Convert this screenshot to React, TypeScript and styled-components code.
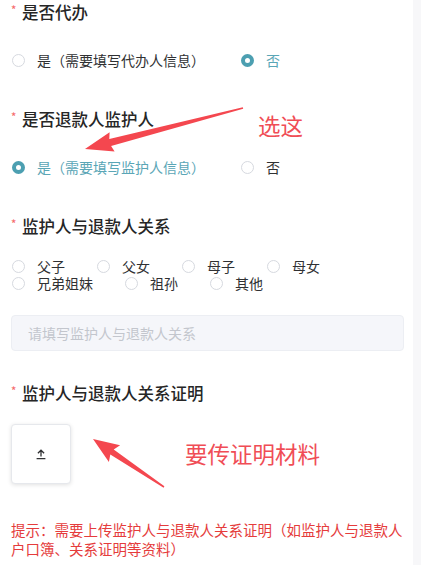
import styled, { createGlobalStyle } from 'styled-components';

const GlobalStyle = createGlobalStyle`
  html, body {
    margin: 0;
    padding: 0;
    background: #f7f7f9;
  }
  * {
    box-sizing: border-box;
  }
`;

const relationOptions = ['父子', '父女', '母子', '母女', '兄弟姐妹', '祖孙', '其他'];

interface OptionProps {
  label: string;
  checked?: boolean;
  gap?: number;
}

function RadioOption({ label, checked = false, gap = 0 }: OptionProps) {
  return (
    <Option $gap={gap}>
      <RadioCircle $checked={checked} />
      <OptionText $checked={checked}>{label}</OptionText>
    </Option>
  );
}

function Title({ children }: { children: string }) {
  return (
    <TitleRow>
      <Star>*</Star>
      {children}
    </TitleRow>
  );
}

export default function App() {
  return (
    <>
      <GlobalStyle />
      <Page>
        <Section $bottom={37}>
          <Title>是否代办</Title>
          <RadioRow>
            <RadioOption label="是（需要填写代办人信息）" gap={36} />
            <RadioOption label="否" checked />
          </RadioRow>
        </Section>

        <Section $bottom={37}>
          <Title>是否退款人监护人</Title>
          <RadioRow>
            <RadioOption label="是（需要填写监护人信息）" checked gap={36} />
            <RadioOption label="否" />
          </RadioRow>
        </Section>

        <Section $bottom={30}>
          <Title>监护人与退款人关系</Title>
          <RelationGroup>
            {relationOptions.map((item) => (
              <RadioOption key={item} label={item} />
            ))}
          </RelationGroup>
          <TextInput placeholder="请填写监护人与退款人关系" />
        </Section>

        <Section $bottom={0}>
          <Title>监护人与退款人关系证明</Title>
          <UploadBox>
            <svg width="12" height="12" viewBox="0 0 12 12" fill="none">
              <path
                d="M6 2.2V8.6M2.9 5.2L6 2.2L9.1 5.2M1.6 10.6H10.4"
                stroke="#303133"
                strokeWidth="1.3"
              />
            </svg>
          </UploadBox>
          <Hint>
            提示：需要上传监护人与退款人关系证明（如监护人与退款人户口簿、关系证明等资料）
          </Hint>
        </Section>

        <ArrowLayer width="421" height="565" viewBox="0 0 421 565">
          <polygon
            points="242.8,107.2 109.3,139.1 109.6,132.3 85,149 114.6,151.6 111.1,145.9 243.2,108.8"
            fill="#f4474f"
          />
          <polygon
            points="164.4,486.3 113.7,449.4 120.1,445.3 93,439 108.9,461.9 110.3,454.4 163.6,487.7"
            fill="#f4474f"
          />
        </ArrowLayer>
        <Note $left={258} $top={111}>选这</Note>
        <Note $left={185} $top={439}>要传证明材料</Note>
      </Page>
    </>
  );
}

const Page = styled.div`
  position: relative;
  width: 413px;
  min-height: 565px;
  background: #ffffff;
  padding: 0 9px 0 11px;
  font-family: 'Noto Sans CJK SC', 'Noto Sans', sans-serif;
  color: #303133;
`;

const Section = styled.div<{ $bottom: number }>`
  display: flex;
  flex-direction: column;
  padding-bottom: ${({ $bottom }) => $bottom}px;
`;

const TitleRow = styled.div`
  display: flex;
  align-items: center;
  height: 24px;
  font-size: 16.5px;
  font-weight: 500;
  color: #262626;
`;

const Star = styled.span`
  width: 11px;
  font-size: 11px;
  color: #f56c6c;
  position: relative;
  top: -3px;
`;

const RadioRow = styled.div`
  display: flex;
  align-items: center;
  height: 20px;
  margin-top: 26px;
  padding-left: 1px;
`;

const RelationGroup = styled.div`
  display: flex;
  flex-wrap: wrap;
  column-gap: 32px;
  margin-top: 20px;
  padding-left: 1px;
  line-height: 17px;
`;

const Option = styled.div<{ $gap: number }>`
  display: flex;
  align-items: center;
  gap: 12px;
  margin-right: ${({ $gap }) => $gap}px;
`;

const RadioCircle = styled.span<{ $checked: boolean }>`
  width: 13px;
  height: 13px;
  border-radius: 50%;
  flex-shrink: 0;
  border: ${({ $checked }) => ($checked ? '4.5px solid #4c9fb1' : '1px solid #d6d9df')};
  background: #ffffff;
`;

const OptionText = styled.span<{ $checked: boolean }>`
  font-size: 14px;
  line-height: 17px;
  color: ${({ $checked }) => ($checked ? '#5aa6b6' : '#303133')};
`;

const TextInput = styled.input`
  margin-top: 23px;
  width: 100%;
  height: 36px;
  border: 1px solid #eceef3;
  border-radius: 4px;
  background: #f5f6fa;
  padding: 0 16px;
  font-family: inherit;
  font-size: 14px;
  outline: none;
  &::placeholder {
    color: #c3c6cd;
  }
`;

const UploadBox = styled.div`
  margin-top: 19px;
  width: 60px;
  height: 60px;
  border: 1px solid #e6e8ec;
  border-radius: 4px;
  background: #ffffff;
  box-shadow: 0 1px 4px rgba(0, 0, 0, 0.12);
  display: flex;
  align-items: center;
  justify-content: center;
`;

const Hint = styled.p`
  margin: 36px 0 0;
  font-size: 14.5px;
  line-height: 19px;
  color: #e53c3c;
`;

const ArrowLayer = styled.svg`
  position: absolute;
  left: 0;
  top: 0;
  pointer-events: none;
`;

const Note = styled.span<{ $left: number; $top: number }>`
  position: absolute;
  left: ${({ $left }) => $left}px;
  top: ${({ $top }) => $top}px;
  font-size: 22.5px;
  line-height: 28px;
  color: #f04d56;
  white-space: nowrap;
`;
